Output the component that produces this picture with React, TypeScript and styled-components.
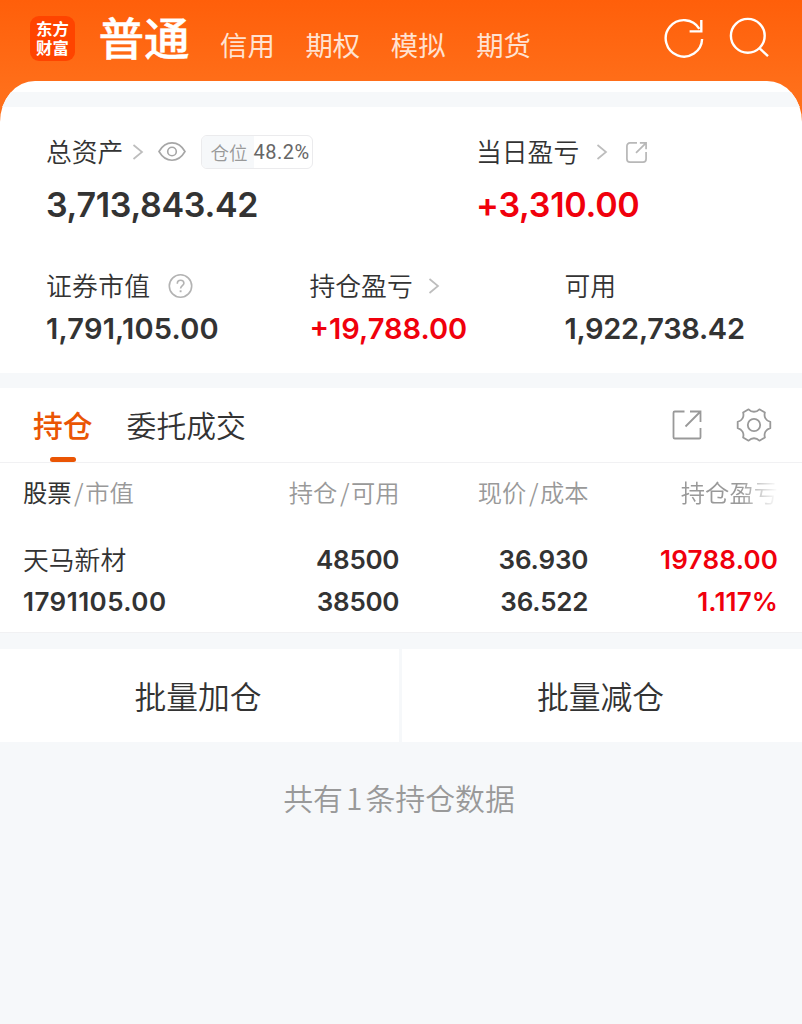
import React from "react";
import styled, { createGlobalStyle } from "styled-components";

const CJK = `"Noto Sans CJK SC", sans-serif`;
const NUM = `Inter, "Noto Sans CJK SC", sans-serif`;
const INK = "#333333";
const RED = "#f0000c";
const MUTED = "#999999";
const PAGE = "#f6f8fa";

const GlobalStyle = createGlobalStyle`
  * { box-sizing: border-box; }
  html, body { margin: 0; padding: 0; background: ${PAGE}; }
  body { font-family: ${CJK}; font-weight: 350; color: ${INK}; }
  svg { display: block; flex: none; }
`;

const Screen = styled.main`
  width: 100%;
  min-height: 1024px;
  background: ${PAGE};
  overflow: hidden;
`;

const Header = styled.header`
  height: 122px;
  background: linear-gradient(180deg, #ff5f0a 0px, #ff6f1a 90px, #ff7019 122px);
`;

const NavBar = styled.nav`
  display: flex;
  height: 81px;
  padding: 16px 31px 0 30px;
`;

const Logo = styled.div`
  width: 45px;
  height: 45px;
  padding-top: 3px;
  border-radius: 9px;
  background: #ff4400;
  color: #fff;
  font-size: 16.4px;
  font-weight: 700;
  line-height: 18.5px;
  text-align: center;
`;

const ActiveAccount = styled.h1`
  margin: -6px 0 0 23.5px;
  width: 98.5px;
  font-size: 45.6px;
  font-weight: 500;
  -webkit-text-stroke: 0.4px #fff;
  line-height: 52px;
  white-space: nowrap;
  color: #fff;
`;

const AccountTabs = styled.div`
  display: flex;
  gap: 30.6px;
  padding: 9px 0 0 23px;
`;

const AccountTab = styled.span`
  font-size: 27.4px;
  font-weight: 400;
  line-height: 38px;
  color: #ffe2d1;
  white-space: nowrap;
`;

const NavActions = styled.div`
  display: flex;
  gap: 25px;
  margin-left: auto;
`;

const SheetTop = styled.div`
  height: 41px;
  padding-top: 11px;
  border-radius: 35px 35px 0 0 / 41px 41px 0 0;
  background: #fff;
  overflow: hidden;
`;

const Band = styled.div<{ $h: number }>`
  height: ${(p) => p.$h}px;
  background: ${PAGE};
`;

const Summary = styled.section`
  height: 251px;
  background: #fff;
  padding-left: 46px;
`;

const SummaryRow = styled.div<{ $cols: string; $top?: number }>`
  display: grid;
  grid-template-columns: ${(p) => p.$cols};
  padding-top: ${(p) => p.$top ?? 0}px;
`;

const LabelLine = styled.div<{ $h: number }>`
  display: flex;
  align-items: center;
  height: ${(p) => p.$h}px;
`;

const Label = styled.span<{ $ls?: number }>`
  padding-bottom: 2px;
  font-size: 25.8px;
  line-height: 36px;
  letter-spacing: ${(p) => p.$ls ?? 0}px;
  white-space: nowrap;
`;

const IconSlot = styled.span<{ $ml: number }>`
  margin-left: ${(p) => p.$ml}px;
`;

const Amount = styled.div<{ $size: number; $ls: number; $red?: boolean }>`
  height: 46px;
  font-family: ${NUM};
  font-size: ${(p) => p.$size}px;
  font-weight: 600;
  line-height: 46px;
  letter-spacing: ${(p) => p.$ls}px;
  color: ${(p) => (p.$red ? RED : INK)};
  white-space: nowrap;
`;

const Badge = styled.span`
  display: flex;
  width: 112px;
  height: 34px;
  margin-left: 15px;
  border: 1.5px solid #ebebed;
  border-radius: 6px;
  overflow: hidden;
  line-height: 32px;
  white-space: nowrap;
`;

const BadgeName = styled.span`
  width: 52px;
  padding-left: 8px;
  background: ${PAGE};
  font-size: 18.5px;
  color: ${MUTED};
`;

const BadgeValue = styled.span`
  margin-left: -1px;
  font-family: Roboto, sans-serif;
  font-weight: 400;
  font-size: 20px;
  letter-spacing: 0.5px;
  color: #666;
`;

const TabBar = styled.div`
  display: flex;
  height: 75px;
  padding: 0 30px 0 33px;
  background: #fff;
  border-bottom: 1.5px solid #f1f1f3;
`;

const Tab = styled.div<{ $active?: boolean }>`
  display: flex;
  flex-direction: column;
  align-items: center;
  justify-content: space-between;
  margin-right: 34px;
  padding-top: 14px;
  font-size: 29.8px;
  font-weight: ${(p) => (p.$active ? 500 : 350)};
  line-height: 44px;
  color: ${(p) => (p.$active ? "#ea5504" : INK)};
`;

const TabMark = styled.i`
  width: 26px;
  height: 5px;
  border-radius: 2.5px;
  background: #ea5504;
`;

const TabActions = styled.div`
  display: flex;
  align-items: center;
  gap: 34px;
  margin-left: auto;
`;

const Table = styled.section`
  height: 170px;
  background: #fff;
  border-bottom: 1px solid #f1f1f3;
`;

const TableRow = styled.div<{ $h: number; $top?: number }>`
  display: grid;
  grid-template-columns: 199.5px 177px 189px 189.5px;
  align-items: center;
  height: ${(p) => p.$h}px;
  margin-top: ${(p) => p.$top ?? 0}px;
  padding-left: 23px;
`;

const HeadCell = styled.span<{ $right?: boolean; $fade?: boolean }>`
  padding-bottom: 2px;
  font-size: 24.3px;
  line-height: 36px;
  text-align: ${(p) => (p.$right ? "right" : "left")};
  white-space: nowrap;
  color: ${MUTED};
  ${(p) =>
    p.$fade &&
    `-webkit-mask-image: linear-gradient(90deg, #000 calc(100% - 38px), transparent 100%);
     mask-image: linear-gradient(90deg, #000 calc(100% - 38px), transparent 100%);`}
`;

const Strong = styled.span`
  color: ${INK};
  font-weight: 400;
`;

const Slash = styled.span`
  margin: 0 1.5px 0 2.5px;
`;

const NumCell = styled.span<{ $left?: boolean; $red?: boolean; $ls?: number }>`
  font-family: ${NUM};
  font-size: 26px;
  font-weight: 600;
  line-height: 42px;
  letter-spacing: ${(p) => p.$ls ?? 0}px;
  margin-right: ${(p) => -(p.$ls ?? 0)}px;
  text-align: ${(p) => (p.$left ? "left" : "right")};
  white-space: nowrap;
  color: ${(p) => (p.$red ? RED : INK)};
`;

const Actions = styled.div`
  display: grid;
  grid-template-columns: 399px 1fr;
  gap: 3px;
  height: 93px;
`;

const ActionButton = styled.button`
  border: 0;
  padding: 0 3px 2px 0;
  background: #fff;
  font-family: ${CJK};
  font-weight: 350;
  font-size: 31.8px;
  line-height: 46px;
  color: ${INK};
`;

const Footnote = styled.p`
  margin: 33px 0 0;
  padding-right: 4px;
  font-size: 29.9px;
  line-height: 44px;
  text-align: center;
  color: ${MUTED};
`;

const FootCount = styled.span`
  margin: 0 3px;
`;

const RefreshIcon = () => (
  <svg width="40" height="44" viewBox="664 16 40 44" fill="none" stroke="#fff" strokeWidth="2.4">
    <path d="M702.1 39A18.2 18.2 0 1 1 699.4 28.8" />
    <path d="M701.3 20V31.4H689.6" />
  </svg>
);

const SearchIcon = () => (
  <svg width="42" height="44" viewBox="729 16 42 44" fill="none" stroke="#fff" strokeWidth="2.4">
    <circle cx="747.8" cy="35.8" r="16.9" />
    <path d="M759.6 48.3L768 56.2" />
  </svg>
);

const Chevron = () => (
  <svg width="12" height="18" viewBox="0 0 12 18" fill="none" stroke="#bdbdbd" strokeWidth="1.7">
    <path d="M1.500 2L10 9L1.500 16" />
  </svg>
);

const EyeIcon = () => (
  <svg width="28" height="20" viewBox="0 0 28 20" fill="none" stroke="#a6a6a6" strokeWidth="1.6">
    <path d="M1 9.500C4.500 3.500 9 0.900 14 0.900S23.500 3.500 27 9.500C23.500 15.500 19 18.200 14 18.200S4.500 15.500 1 9.500Z" />
    <circle cx="14" cy="9.500" r="4.300" />
  </svg>
);

const HelpIcon = () => (
  <svg width="25" height="25" viewBox="0 0 25 25" fill="none" stroke="#b3b3b3" strokeWidth="1.6">
    <circle cx="12.500" cy="12" r="11.200" />
    <path d="M9.300 9.700C9.300 7.500 10.700 6.300 12.600 6.300C14.500 6.300 15.900 7.500 15.900 9.300C15.900 11.700 12.600 11.800 12.600 14.600" />
    <path d="M12.600 16.300V18.200" strokeWidth="1.900" />
  </svg>
);

const ShareSmallIcon = () => (
  <svg width="23" height="23" viewBox="0 0 24 24" fill="none" stroke="#b8b8b8" strokeWidth="1.8">
    <path d="M12.500 2H5.200A3.200 3.200 0 0 0 2 5.200V18.800A3.200 3.200 0 0 0 5.200 22H18.800A3.200 3.200 0 0 0 22 18.800V11.500" />
    <path d="M15.500 2H22V8.500M21.500 2.500L11.500 12.500" />
  </svg>
);

const ShareIcon = () => (
  <svg width="30" height="30" viewBox="0 0 30 30" fill="none" stroke="#999" strokeWidth="1.8">
    <path d="M12.500 1.500H2.800Q1.500 1.500 1.500 2.800V27.200Q1.500 28.500 2.800 28.500H27.200Q28.500 28.500 28.500 27.200V18" />
    <path d="M18 1.500H28.500V12M28 2L13.500 16.500" />
  </svg>
);

const polar = (deg: number, r: number) => {
  const a = (deg * Math.PI) / 180;
  return `${(18 + r * Math.cos(a)).toFixed(2)} ${(18 + r * Math.sin(a)).toFixed(2)}`;
};

const gearPath =
  `M${polar(-11, 16.6)}` +
  [0, 60, 120, 180, 240, 300]
    .map((d) => `L${polar(d + 11, 16.6)}C${polar(d + 20, 12.6)} ${polar(d + 40, 12.6)} ${polar(d + 49, 16.6)}`)
    .join("") +
  "Z";

const GearIcon = () => (
  <svg width="36" height="36" viewBox="0 0 36 36" fill="none" stroke="#999" strokeWidth="1.8" strokeLinejoin="round">
    <path d={gearPath} />
    <circle cx="18" cy="18" r="6.200" />
  </svg>
);

export default function App() {
  return (
    <Screen>
      <GlobalStyle />
      <Header>
        <NavBar>
          <Logo>
            东方
            <br />
            财富
          </Logo>
          <ActiveAccount>普通</ActiveAccount>
          <AccountTabs>
            {["信用", "期权", "模拟", "期货"].map((name) => (
              <AccountTab key={name}>{name}</AccountTab>
            ))}
          </AccountTabs>
          <NavActions>
            <RefreshIcon />
            <SearchIcon />
          </NavActions>
        </NavBar>
        <SheetTop>
          <Band $h={15} />
        </SheetTop>
      </Header>

      <Summary>
        <SummaryRow $cols="430px 1fr">
          <div>
            <LabelLine $h={60}>
              <Label>总资产</Label>
              <IconSlot $ml={9}><Chevron /></IconSlot>
              <IconSlot $ml={14}><EyeIcon /></IconSlot>
              <Badge>
                <BadgeName>仓位</BadgeName>
                <BadgeValue>48.2%</BadgeValue>
              </Badge>
            </LabelLine>
            <Amount $size={34} $ls={-0.3}>3,713,843.42</Amount>
          </div>
          <div>
            <LabelLine $h={60}>
              <Label>当日盈亏</Label>
              <IconSlot $ml={17}><Chevron /></IconSlot>
              <IconSlot $ml={17}><ShareSmallIcon /></IconSlot>
            </LabelLine>
            <Amount $size={34} $ls={-0.25} $red>+3,310.00</Amount>
          </div>
        </SummaryRow>
        <SummaryRow $cols="263.5px 255px 1fr" $top={38}>
          <div>
            <LabelLine $h={40}>
              <Label $ls={0.3}>证券市值</Label>
              <IconSlot $ml={18}><HelpIcon /></IconSlot>
            </LabelLine>
            <Amount $size={29} $ls={0.2}>1,791,105.00</Amount>
          </div>
          <div>
            <LabelLine $h={40}>
              <Label>持仓盈亏</Label>
              <IconSlot $ml={15.5}><Chevron /></IconSlot>
            </LabelLine>
            <Amount $size={29} $ls={0} $red>+19,788.00</Amount>
          </div>
          <div>
            <LabelLine $h={40}>
              <Label>可用</Label>
            </LabelLine>
            <Amount $size={29} $ls={-0.3}>1,922,738.42</Amount>
          </div>
        </SummaryRow>
      </Summary>

      <Band $h={15} />

      <TabBar>
        <Tab $active>
          持仓
          <TabMark />
        </Tab>
        <Tab>委托成交</Tab>
        <TabActions>
          <ShareIcon />
          <GearIcon />
        </TabActions>
      </TabBar>

      <Table>
        <TableRow $h={60}>
          <HeadCell><Strong>股票</Strong><Slash>/</Slash>市值</HeadCell>
          <HeadCell $right>持仓<Slash>/</Slash>可用</HeadCell>
          <HeadCell $right>现价<Slash>/</Slash>成本</HeadCell>
          <HeadCell $right $fade>持仓盈亏</HeadCell>
        </TableRow>
        <TableRow $h={42} $top={16}>
          <Label>天马新材</Label>
          <NumCell $ls={-0.3}>48500</NumCell>
          <NumCell $ls={-0.15}>36.930</NumCell>
          <NumCell $red $ls={0.25}>19788.00</NumCell>
        </TableRow>
        <TableRow $h={42}>
          <NumCell $left $ls={0.45}>1791105.00</NumCell>
          <NumCell $ls={-0.3}>38500</NumCell>
          <NumCell $ls={-0.2}>36.522</NumCell>
          <NumCell $red $ls={0.15}>1.117%</NumCell>
        </TableRow>
      </Table>

      <Band $h={16} />

      <Actions>
        <ActionButton>批量加仓</ActionButton>
        <ActionButton>批量减仓</ActionButton>
      </Actions>

      <Footnote>
        共有<FootCount>1</FootCount>条持仓数据
      </Footnote>
    </Screen>
  );
}
